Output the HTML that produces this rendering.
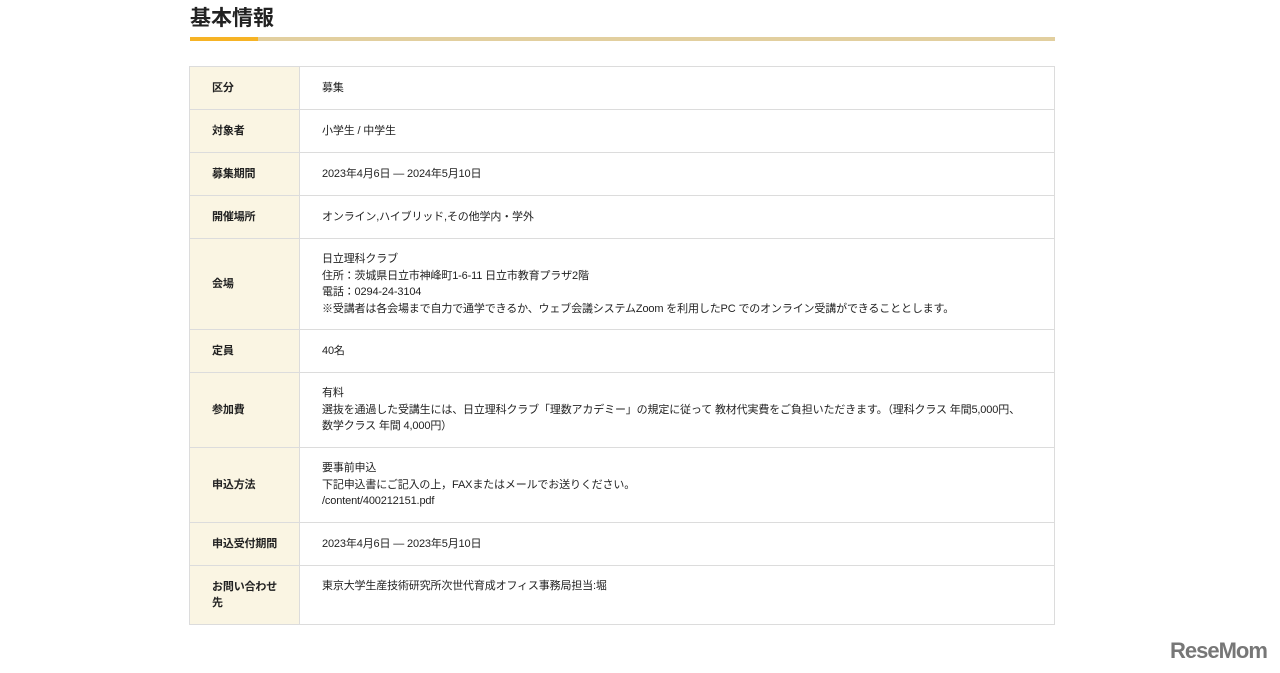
<!DOCTYPE html>
<html><head><meta charset="utf-8"><style>
body{margin:0;background:#fff;font-family:"Liberation Sans","Noto Sans CJK JP",sans-serif;color:#222;width:1280px;height:673px;overflow:hidden;position:relative}
h1{position:absolute;left:190px;top:5px;margin:0;font-size:21px;font-weight:bold;line-height:28px}
.bar{position:absolute;left:190px;top:37px;width:865px;height:4px;background:#e2cf9f}
.bar i{display:block;width:68px;height:4px;background:#f6b325}
table{position:absolute;left:189px;top:66px;width:866px;border-collapse:collapse;font-size:11px;line-height:16.5px;table-layout:fixed;letter-spacing:-0.15px}
td{border:1px solid #dcdcdc;padding:0 22px;vertical-align:middle}
td.l{background:#faf5e3;font-weight:bold;padding-right:10px}
.logo{position:absolute;left:1170px;top:638px;font-size:22px;font-weight:bold;color:#777;letter-spacing:-1px}
</style></head><body>
<h1>基本情報</h1>
<div class="bar"><i></i></div>
<table>
<colgroup><col style="width:110px"><col></colgroup>
<tr style="height:43px"><td class="l">区分</td><td>募集</td></tr>
<tr style="height:43px"><td class="l">対象者</td><td>小学生 / 中学生</td></tr>
<tr style="height:43px"><td class="l">募集期間</td><td>2023年4月6日 ― 2024年5月10日</td></tr>
<tr style="height:43px"><td class="l">開催場所</td><td>オンライン,ハイブリッド,その他学内・学外</td></tr>
<tr style="height:91px"><td class="l">会場</td><td>日立理科クラブ<br>住所：茨城県日立市神峰町1-6-11 日立市教育プラザ2階<br>電話：0294-24-3104<br>※受講者は各会場まで自力で通学できるか、ウェブ会議システムZoom を利用したPC でのオンライン受講ができることとします。</td></tr>
<tr style="height:43px"><td class="l">定員</td><td>40名</td></tr>
<tr style="height:75px"><td class="l">参加費</td><td>有料<br>選抜を通過した受講生には、日立理科クラブ「理数アカデミー」の規定に従って 教材代実費をご負担いただきます。（理科クラス 年間5,000円、<br>数学クラス 年間 4,000円）</td></tr>
<tr style="height:75px"><td class="l">申込方法</td><td>要事前申込<br>下記申込書にご記入の上，FAXまたはメールでお送りください。<br>/content/400212151.pdf</td></tr>
<tr style="height:43px"><td class="l">申込受付期間</td><td>2023年4月6日 ― 2023年5月10日</td></tr>
<tr style="height:59px"><td class="l">お問い合わせ<br>先</td><td style="vertical-align:top;padding-top:12px">東京大学生産技術研究所次世代育成オフィス事務局担当:堀</td></tr>
</table>
<div class="logo">ReseMom</div>
</body></html>
